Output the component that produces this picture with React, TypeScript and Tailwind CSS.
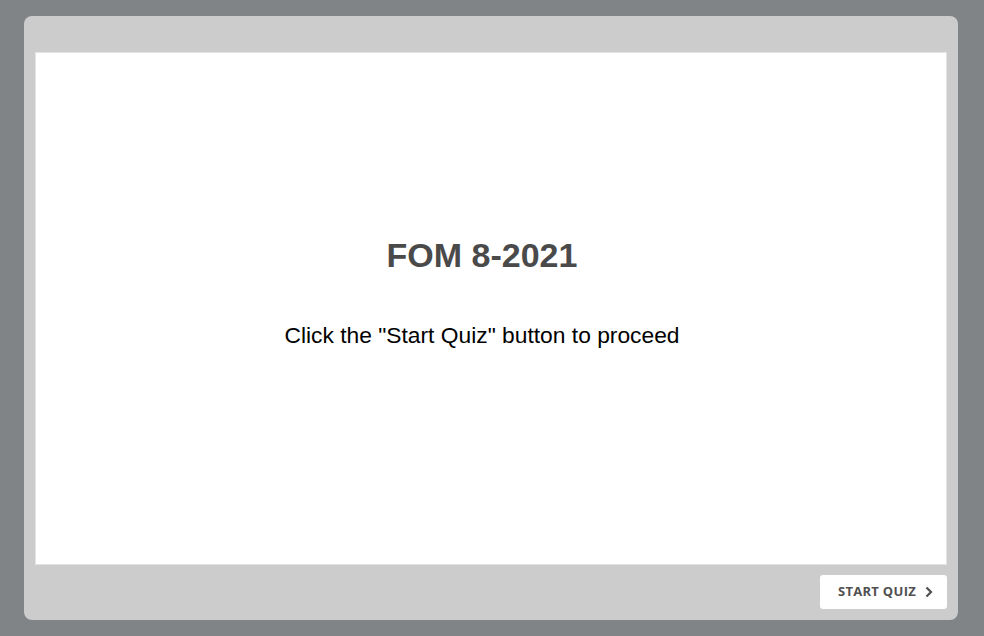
import React from "react";

export default function App() {
  return (
    <div className="w-[984px] h-[636px] bg-[#818487] pt-[16px] pl-[24px]">
      <div className="w-[934px] h-[604px] rounded-[8px] bg-[#cccccc] pt-[36px] px-[11px] flex flex-col">
        <div className="w-[912px] h-[513px] bg-white border border-[#e4e4e4] flex flex-col items-center pt-[182px] pr-[18px]">
          <h1 className="text-[34px] leading-[40px] font-bold text-[#4a4a4a] [font-family:'Liberation_Sans',Arial,sans-serif]">
            FOM 8-2021
          </h1>
          <p className="mt-[46px] text-[22.8px] leading-[28px] text-black [font-family:'Liberation_Sans',Arial,sans-serif]">
            Click the "Start Quiz" button to proceed
          </p>
        </div>
        <div className="flex justify-end mt-[10px]">
          <button className="w-[127px] h-[34px] bg-white rounded-[3px] flex items-center justify-center gap-[9px] pl-[4px] text-[13px] font-bold text-[#505050] tracking-[0.3px] [font-family:'Open_Sans',sans-serif]">
            <span>START QUIZ</span>
            <svg width="8" height="12" viewBox="0 0 8 12" fill="none">
              <path d="M1.5 1.5 L6 6 L1.5 10.5" stroke="#505050" strokeWidth="2.2" />
            </svg>
          </button>
        </div>
      </div>
    </div>
  );
}
